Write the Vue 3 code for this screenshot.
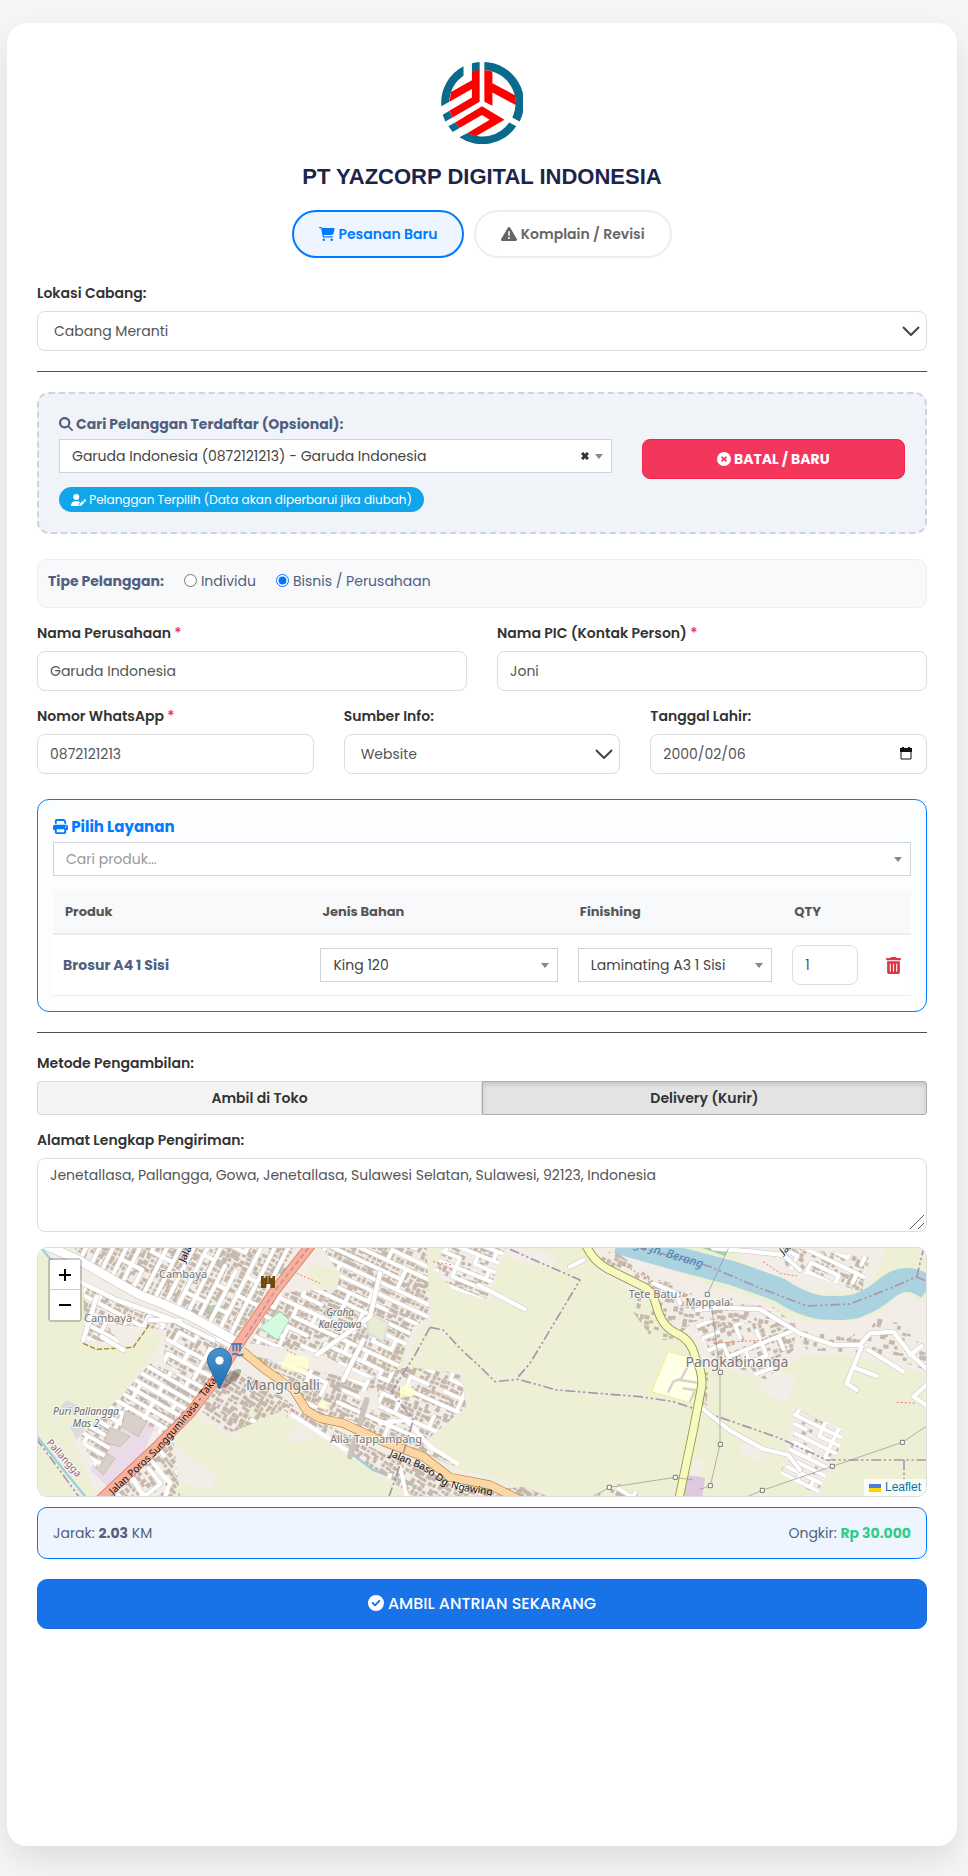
<script setup>
import { ref } from 'vue'

const icons = {
  cart: { box: '0 0 576 512', d: 'M0 24C0 10.7 10.7 0 24 0H69.5c22 0 41.5 12.8 50.6 32h411c26.3 0 45.5 25 38.6 50.4l-41 152.3c-8.5 31.4-37 53.3-69.5 53.3H170.7l5.4 28.5c2.2 11.3 12.1 19.5 23.6 19.5H488c13.3 0 24 10.7 24 24s-10.7 24-24 24H199.7c-34.6 0-64.3-24.6-70.7-58.5L77.4 54.5c-.7-3.8-4-6.5-7.9-6.5H24C10.7 48 0 37.3 0 24zM128 464a48 48 0 1 1 96 0 48 48 0 1 1 -96 0zm336-48a48 48 0 1 1 0 96 48 48 0 1 1 0-96z' },
  warn: { box: '0 32 512 448', d: 'M256 32c14.2 0 27.3 7.5 34.5 19.8l216 368c7.3 12.4 7.3 27.7 .2 40.1S486.3 480 472 480H40c-14.3 0-27.6-7.7-34.7-20.1s-7-27.8 .2-40.1l216-368C228.7 39.5 241.8 32 256 32zm0 128c-13.3 0-24 10.7-24 24V296c0 13.3 10.7 24 24 24s24-10.7 24-24V184c0-13.3-10.7-24-24-24zm32 224a32 32 0 1 0 -64 0 32 32 0 1 0 64 0z' },
  search: { box: '0 0 512 512', d: 'M416 208c0 45.9-14.9 88.3-40 122.7L502.6 457.4c12.5 12.5 12.5 32.8 0 45.3s-32.8 12.5-45.3 0L330.7 376c-34.4 25.2-76.8 40-122.7 40C93.1 416 0 322.9 0 208S93.1 0 208 0S416 93.1 416 208zM208 336a128 128 0 1 0 0-256 128 128 0 1 0 0 256z' },
  xmark: { box: '0 0 512 512', d: 'M256 512A256 256 0 1 0 256 0a256 256 0 1 0 0 512zM160 175c12-16 32-16 45 0l51 47 51-47c13-13 32-13 45 0s12 32 0 45l-47 36 47 47c12 12 12 32 0 45s-32 12-45 0l-51-47-51 47c-13 12-32 12-45 0s-12-32 0-45l47-47-47-36c-12-13-12-33 0-45z' },
  check: { box: '0 0 512 512', d: 'M256 512A256 256 0 1 0 256 0a256 256 0 1 0 0 512zM385 209L246 348c-12 12-31 12-43 0l-76-76c-12-12-12-31 0-43s31-12 43 0l55 55L342 166c12-12 31-12 43 0s12 31 0 43z' },
  print: { box: '0 0 512 512', d: 'M128 0C92.7 0 64 28.7 64 64v96h64V64H354.7L384 93.3V160h64V93.3c0-17-6.7-33.3-18.7-45.3L400 18.7C388 6.7 371.7 0 354.7 0H128zM384 352v32 64H128V384 368 352H384zm64 32h32c17.7 0 32-14.3 32-32V256c0-35.3-28.7-64-64-64H64c-35.3 0-64 28.7-64 64v96c0 17.7 14.3 32 32 32H64v64c0 35.3 28.7 64 64 64H384c35.3 0 64-28.7 64-64V384zM432 248a24 24 0 1 1 0 48 24 24 0 1 1 0-48z' },
  userPen: { box: '0 0 640 512', d: 'M224 256A128 128 0 1 0 224 0a128 128 0 1 0 0 256zm-45.7 48C79.8 304 0 383.8 0 482.3C0 498.7 13.3 512 29.7 512H322.8c-3.1-8.8-3.7-18.4-1.4-27.8l15-60.1c2.8-11.3 8.6-21.5 16.8-29.7l40.3-40.3c-32.1-31-75.7-50.1-123.9-50.1H178.3zm435.5-68.3c-15.6-15.6-40.9-15.6-56.6 0l-29.4 29.4 71 71 29.4-29.4c15.6-15.6 15.6-40.9 0-56.6l-14.4-14.4zM375.9 417c-4.1 4.1-7 9.2-8.4 14.9l-15 60.1c-1.4 5.5 .2 11.2 4.2 15.2s9.7 5.6 15.2 4.2l60.1-15c5.6-1.4 10.8-4.3 14.9-8.4L576.1 358.7l-71-71L375.9 417z' },
  trash: { box: '0 0 448 512', d: 'M135.2 17.7C140.6 6.8 151.7 0 163.8 0H284.2c12.1 0 23.2 6.8 28.6 17.7L320 32h96c17.7 0 32 14.3 32 32s-14.3 32-32 32H32C14.3 96 0 81.7 0 64S14.3 32 32 32h96l7.2-14.3zM32 128H416V448c0 35.3-28.7 64-64 64H96c-35.3 0-64-28.7-64-64V128zm96 64c-8.8 0-16 7.2-16 16V432c0 8.8 7.2 16 16 16s16-7.2 16-16V208c0-8.8-7.2-16-16-16zm96 0c-8.8 0-16 7.2-16 16V432c0 8.8 7.2 16 16 16s16-7.2 16-16V208c0-8.8-7.2-16-16-16zm96 0c-8.8 0-16 7.2-16 16V432c0 8.8 7.2 16 16 16s16-7.2 16-16V208c0-8.8-7.2-16-16-16z' },
}

const tab = ref('baru')
const customerType = ref('bisnis')
const company = ref('Garuda Indonesia')
const pic = ref('Joni')
const phone = ref('0872121213')
const birth = ref('2000/02/06')
const qty = ref(1)
const delivery = ref('kurir')
const address = ref('Jenetallasa, Pallangga, Gowa, Jenetallasa, Sulawesi Selatan, Sulawesi, 92123, Indonesia')

// Housing districts: outline, street bearing, block size, share of streets and houses kept
const districts = [
  { pts: [[130, 20], [800, 20], [620, 290], [480, 215], [330, 150], [170, 70]], ang: 27, u: 36, v: 62, road: 0.35, cross: 0.9, house: 0.95 },
  { pts: [[870, 20], [1190, 20], [1200, 230], [1150, 260], [1090, 420], [1000, 410], [870, 340], [660, 310], [740, 160], [840, 150], [920, 150], [930, 100]], ang: 25, u: 62, v: 34, road: 0.85, cross: 0.35, house: 0.95 },
  { pts: [[160, 130], [400, 230], [610, 310], [590, 370], [530, 440], [450, 400], [400, 370], [410, 270], [230, 250], [270, 310], [160, 300]], ang: 28, u: 52, v: 36, road: 0.75, cross: 0.3, house: 0.9 },
  { pts: [[360, 370], [540, 440], [400, 590], [300, 520], [200, 690], [150, 590], [290, 450]], ang: 30, u: 60, v: 27, road: 0.95, cross: 0.45, house: 0.9 },
  { pts: [[640, 340], [1000, 425], [1130, 380], [1290, 400], [1310, 500], [1190, 600], [1280, 680], [1060, 600], [870, 530], [720, 400]], ang: 24, u: 56, v: 40, road: 0.65, cross: 0.3, house: 0.9 },
  { pts: [[600, 390], [690, 420], [820, 520], [1060, 640], [1190, 680], [1380, 750], [1480, 740], [1550, 768], [1150, 768], [960, 640], [760, 510], [600, 580], [510, 510]], ang: 32, u: 110, v: 80, road: 0.4, cross: 0.2, house: 0.9 },
  { pts: [[1215, 90], [1240, 20], [1430, 20], [1400, 90], [1370, 180], [1270, 150]], ang: 22, u: 48, v: 30, road: 0.9, cross: 0.35, house: 0.6 },
  { pts: [[340, 650], [430, 600], [450, 768], [260, 768]], ang: 52, u: 60, v: 60, road: 0.6, cross: 0.3, house: 0.7 },
  { pts: [[2250, 20], [2520, 50], [2495, 155], [2270, 85]], ang: 26, u: 46, v: 30, road: 0.85, cross: 0.5, house: 0.6 },
  { pts: [[2290, 500], [2440, 570], [2430, 620], [2360, 765], [2250, 700], [2290, 600]], ang: 26, u: 44, v: 25, road: 0.92, cross: 0.4, house: 0.15 },
  { pts: [[1990, 240], [2150, 250], [2300, 250], [2290, 330], [2210, 420], [2040, 350]], ang: -22, u: 54, v: 40, road: 0.65, cross: 0.35, house: 0.6 },
  { pts: [[1840, 110], [1930, 130], [1990, 180], [2230, 200], [2300, 260], [2000, 235], [1930, 300], [1870, 300], [1790, 190]], ang: 12, u: 90, v: 70, road: 0.2, cross: 0.1, house: 0.6 },
  { pts: [[1690, 60], [1750, 30], [1860, 110], [1840, 150]], ang: 27, u: 200, v: 200, road: 0, cross: 0, house: 0.6 },
  { pts: [[2300, 270], [2500, 300], [2540, 235], [2610, 250], [2688, 330], [2688, 390], [2600, 360], [2500, 340], [2330, 330]], ang: 10, u: 200, v: 200, road: 0, cross: 0, house: 0.4 },
  { pts: [[2010, 380], [2035, 400], [2030, 500], [2010, 500]], ang: 0, u: 200, v: 200, road: 0, cross: 0, house: 0.9 },
  { pts: [[1700, 768], [1720, 745], [1790, 725], [1830, 768]], ang: 30, u: 50, v: 40, road: 0.6, cross: 0.3, house: 0.4 },
]

// Small seeded generator, so the street pattern is the same on each load
let seed = 7
const rnd = () => {
  seed = (seed * 16807) % 2147483647
  return seed / 2147483647
}

const blocks = districts.map((area, id) => {
  const xs = area.pts.map((p) => p[0])
  const ys = area.pts.map((p) => p[1])
  const cx = (Math.min(...xs) + Math.max(...xs)) / 2
  const cy = (Math.min(...ys) + Math.max(...ys)) / 2
  const r = Math.hypot(Math.max(...xs) - cx, Math.max(...ys) - cy)
  const nu = Math.ceil(r / area.u)
  const nv = Math.ceil(r / area.v)
  let streets = ''
  let houses = ''
  for (let y = -r; y < r; y += 15) {
    for (let x = -r; x < r; x += 16) {
      if (rnd() < area.house) {
        const w = Math.round(9 + rnd() * 8)
        const h = Math.round(8 + rnd() * 7)
        houses += `M${Math.round(x + rnd() * 5)} ${Math.round(y + rnd() * 5)}h${w}v${h}h-${w}z`
      }
    }
  }
  for (let i = -nu; i <= nu; i++) {
    for (let j = -nv; j <= nv; j++) {
      const x = i * area.u
      const y = j * area.v
      if (rnd() < area.road) streets += `M${x} ${y}h${area.u}`
      if (rnd() < area.cross) streets += `M${x} ${y}v${area.v}`
    }
  }
  return {
    id: `district-${id}`,
    outline: area.pts.map((p) => p.join(',')).join(' '),
    place: `translate(${cx} ${cy}) rotate(${area.ang})`,
    streets,
    houses,
  }
})

const pylons = [[682, 163], [721, 397], [721, 613], [691, 737], [586, 712], [388, 742], [847, 751], [1057, 679], [1267, 607]]
</script>

<template>
  <main class="card">
    <header class="head">
      <svg class="logo" viewBox="483 66 244 244" role="img" aria-label="Yazcorp">
        <g fill="#0a6a8c">
          <path d="M550 79A122 122 0 0 0 484 198L508 184A98 98 0 0 1 550 107Z" />
          <path d="M575 70A122 122 0 0 1 598 66V91L575 95Z" />
          <path d="M612 66A122 122 0 0 1 717 243L695 231A98 98 0 0 0 612 90Z" />
          <path d="M707 257A122 122 0 0 1 538 290L562 277A98 98 0 0 0 686 246Z" />
          <path d="M488 223L509 211L517 231L496 243Z" />
          <path d="M505 257L525 246L539 262L518 274Z" />
        </g>
        <g fill="#f00">
          <path d="M598 90L575 94V120L513 155L508 184L575 146V172L509 210L517 231L598 184Z" />
          <path d="M612 90L636 94V129L703 165L707 195L636 157V196L612 184Z" />
          <path d="M605 198L672 238L587 287L561 278L628 238L605 224L539 262L525 246Z" />
        </g>
      </svg>
      <h1>PT YAZCORP DIGITAL INDONESIA</h1>
      <nav class="tabs">
        <button type="button" class="tab" :class="{ on: tab === 'baru' }" @click="tab = 'baru'">
          <svg class="ic" :viewBox="icons.cart.box"><path :d="icons.cart.d" /></svg>
          Pesanan Baru
        </button>
        <button type="button" class="tab" :class="{ on: tab === 'komplain' }" @click="tab = 'komplain'">
          <svg class="ic" :viewBox="icons.warn.box"><path :d="icons.warn.d" /></svg>
          Komplain / Revisi
        </button>
      </nav>
    </header>

    <form @submit.prevent>
      <div class="field">
        <label for="cabang">Lokasi Cabang:</label>
        <div class="pick">
          <select id="cabang" class="control wide-pad"><option>Cabang Meranti</option></select>
          <svg class="chev" viewBox="0 0 18 10"><path d="M1 1L9 9L17 1" /></svg>
        </div>
      </div>

      <hr />

      <section class="finder">
        <div class="finder-main">
          <label for="pelanggan" class="finder-label">
            <svg class="ic" :viewBox="icons.search.box"><path :d="icons.search.d" /></svg>
            Cari Pelanggan Terdaftar (Opsional):
          </label>
          <div class="pick">
            <select id="pelanggan" class="combo"><option>Garuda Indonesia (0872121213) - Garuda Indonesia</option></select>
            <button type="button" class="clear" aria-label="Hapus">
              <svg viewBox="0 0 8 8"><path d="M1 1L7 7M7 1L1 7" /></svg>
            </button>
            <span class="caret"></span>
          </div>
          <span class="badge">
            <svg class="ic" :viewBox="icons.userPen.box"><path :d="icons.userPen.d" /></svg>
            Pelanggan Terpilih (Data akan diperbarui jika diubah)
          </span>
        </div>
        <button type="button" class="cancel">
          <svg class="ic" :viewBox="icons.xmark.box"><path :d="icons.xmark.d" /></svg>
          BATAL / BARU
        </button>
      </section>

      <fieldset class="kind">
        <span class="kind-title">Tipe Pelanggan:</span>
        <label><input v-model="customerType" type="radio" name="tipe" value="individu" />Individu</label>
        <label><input v-model="customerType" type="radio" name="tipe" value="bisnis" />Bisnis / Perusahaan</label>
      </fieldset>

      <div class="row two">
        <div class="field">
          <label for="perusahaan">Nama Perusahaan <i>*</i></label>
          <input id="perusahaan" v-model="company" class="control" type="text" />
        </div>
        <div class="field">
          <label for="pic">Nama PIC (Kontak Person) <i>*</i></label>
          <input id="pic" v-model="pic" class="control" type="text" />
        </div>
      </div>

      <div class="row three">
        <div class="field">
          <label for="wa">Nomor WhatsApp <i>*</i></label>
          <input id="wa" v-model="phone" class="control" type="tel" />
        </div>
        <div class="field">
          <label for="sumber">Sumber Info:</label>
          <div class="pick">
            <select id="sumber" class="control wide-pad"><option>Website</option></select>
            <svg class="chev" viewBox="0 0 18 10"><path d="M1 1L9 9L17 1" /></svg>
          </div>
        </div>
        <div class="field">
          <label for="lahir">Tanggal Lahir:</label>
          <div class="pick">
            <input id="lahir" v-model="birth" class="control" type="text" />
            <svg class="cal" viewBox="0 0 12 13"><path d="M1 2H11V12H1Z" /><path class="bar" d="M0 1H12V5H0ZM2 0H4V2H2ZM8 0H10V2H8Z" /></svg>
          </div>
        </div>
      </div>

      <section class="services">
        <label for="produk" class="services-title">
          <svg class="ic" :viewBox="icons.print.box"><path :d="icons.print.d" /></svg>
          Pilih Layanan
        </label>
        <div class="pick">
          <select id="produk" class="combo muted"><option>Cari produk...</option></select>
          <span class="caret"></span>
        </div>
        <table>
          <colgroup>
            <col class="c30" /><col class="c30" /><col class="c25" /><col class="c10" /><col class="c5" />
          </colgroup>
          <thead>
            <tr><th>Produk</th><th>Jenis Bahan</th><th>Finishing</th><th>QTY</th><th></th></tr>
          </thead>
          <tbody>
            <tr>
              <td class="name">Brosur A4 1 Sisi</td>
              <td>
                <div class="pick">
                  <select class="combo" aria-label="Jenis Bahan"><option>King 120</option></select>
                  <span class="caret"></span>
                </div>
              </td>
              <td>
                <div class="pick">
                  <select class="combo" aria-label="Finishing"><option>Laminating A3 1 Sisi</option></select>
                  <span class="caret"></span>
                </div>
              </td>
              <td><input v-model="qty" class="control" type="number" aria-label="QTY" /></td>
              <td>
                <button type="button" class="trash" aria-label="Hapus produk">
                  <svg :viewBox="icons.trash.box"><path :d="icons.trash.d" /></svg>
                </button>
              </td>
            </tr>
          </tbody>
        </table>
      </section>

      <hr class="tight" />

      <div class="field method">
        <label for="toko">Metode Pengambilan:</label>
        <div class="switch">
          <button id="toko" type="button" :class="{ on: delivery === 'toko' }" @click="delivery = 'toko'">Ambil di Toko</button>
          <button type="button" :class="{ on: delivery === 'kurir' }" @click="delivery = 'kurir'">Delivery (Kurir)</button>
        </div>
      </div>

      <div class="field address">
        <label for="alamat">Alamat Lengkap Pengiriman:</label>
        <div class="pick">
          <textarea id="alamat" v-model="address" class="control"></textarea>
          <svg class="grip" viewBox="0 0 16 16"><path d="M1 15L15 1M9 15L15 9" /></svg>
        </div>
      </div>

      <div class="map">
        <svg class="tiles" viewBox="0 0 888 248" preserveAspectRatio="xMidYMid slice">
          <defs>
            <clipPath v-for="b in blocks" :id="b.id" :key="b.id"><polygon :points="b.outline" /></clipPath>
            <path id="poros" d="M75 247L122 203L155 165L190 118" />
            <path id="baso" d="M351 208L385 222L407 238L425 243L452 247L490 257" />
            <linearGradient id="pin" x1="0" y1="0" x2="0" y2="1">
              <stop offset="0" stop-color="#4794d0" /><stop offset="1" stop-color="#1f6cb0" />
            </linearGradient>
          </defs>
          <rect width="888" height="248" fill="#eef0d5" />
          <g transform="translate(-8 -8) scale(.33333)" fill="none" stroke-linejoin="round">
            <g fill="#f2ede7">
              <path d="M70 20H1200L1190 130L1210 240L1165 265L1120 410L1290 395L1315 500L1200 600L1290 690L1400 715L1550 768H1150L960 650L760 520L680 440L620 600L480 520L430 620L560 700L540 750L420 720V768H200L130 600L230 530L290 440L360 360L400 290L370 245L300 320L150 310L200 170L50 60Z" />
              <path d="M1205 90L1240 20H1480L1410 60L1380 190L1270 150ZM800 560L760 600L830 610L850 570Z" />
            </g>
            <path d="M840 70L940 100L905 155L835 130ZM1050 310L1130 320L1115 400L1040 390Z" fill="#eef0d5" />
            <path d="M980 450L1060 440L1050 540L990 520Z" fill="#f2ede7" />
            <path d="M290 490L385 535L340 640L235 745L180 690Z" fill="#ebdbe8" />
            <path d="M90 500L110 480L150 500L140 530ZM120 560L150 540L170 560L140 600Z" fill="#dcdcdc" />
            <g transform="translate(1350 0)" fill="#f2ede7">
              <path d="M340 20L480 40L640 120L870 190L920 240L1100 245L1200 220L1260 160L1340 190V400L1100 345L960 345L860 425L760 395L680 380L640 320L560 250L500 180L350 90Z" />
              <path d="M750 20H1220L1170 145L1000 160L800 70Z" />
              <path d="M860 385L950 405L920 490L840 450ZM790 590L860 630L840 665L780 640ZM640 650L680 670L660 710L630 700ZM80 20L230 40L220 90L100 60ZM940 500L1090 570L1020 760L910 700Z" />
              <path d="M565 335L640 355L660 400L640 490L515 455Z" fill="#ffffe5" stroke="#f5f08a" stroke-width="3" />
              <path d="M620 705L675 713L667 770H608Z" fill="#dfc9df" />
              <path d="M412 5L600 58L760 100L900 150Q960 192 1020 202Q1090 208 1130 198Q1180 180 1220 145Q1280 95 1345 145" stroke="#aad3df" stroke-width="72" fill="none" />
              <path d="M655 20H745L735 48Z" fill="#a9d0a0" />
            </g>
            <path d="M520 212L550 195L592 200L578 225L552 236ZM745 80L775 85L760 105L742 100Z" fill="#aecfb2" />
            <g stroke="#9ccfe0" stroke-width="7">
              <path d="M35 25L75 75M425 238L530 285L610 318M950 630L1030 690L1160 740M22 590L85 670L170 775M910 20L960 60" />
            </g>

            <g v-for="b in blocks" :key="b.id" :clip-path="`url(#${b.id})`">
              <g :transform="b.place">
                <path :d="b.houses" fill="#c6b8ac" />
                <path :d="b.streets" stroke="#cfcac6" stroke-width="15" stroke-linecap="round" />
                <path :d="b.streets" stroke="#fff" stroke-width="12" stroke-linecap="round" />
              </g>
            </g>

            <path d="M750 215L778 240L742 300L690 262Z" fill="#d5fbde" stroke="#8fd3b5" stroke-width="2" />
            <path d="M770 340L838 352L832 405L750 385ZM870 480L905 490L890 512L860 500ZM1110 440L1140 430L1160 465L1110 475Z" fill="#ffffd0" fill-opacity=".8" />
            <path d="M1010 240L1030 225L1075 250L1060 305L1015 280Z" fill="#e8ecd3" stroke="#ddd" stroke-width="6" />
            <path d="M985 460L1040 440L1050 500L1010 520Z" fill="#f2ede7" />
            <path d="M285 510L350 545L325 590L275 560ZM240 560L300 590L270 620L220 605ZM230 640L255 655L220 705L205 690Z" fill="#d9d0c9" stroke="#bfb0a5" stroke-width="2" />
            <path d="M160 310L200 328L310 322L362 248" stroke="#ac8327" stroke-width="4" stroke-dasharray="16 6" />
            <g stroke-linecap="round">
              <g stroke="#c9c4c0" stroke-width="17">
                <path d="M150 125L260 180L430 240L550 300M200 170L160 300M215 290L280 330M360 240L450 242M1010 480L960 650M860 345L1020 230L1050 100M940 420L1000 300" />
              </g>
              <path d="M45 15L150 62L250 120L330 165L400 192L480 228L560 272L632 312" stroke="#c9c4c0" stroke-width="29" />
              <g stroke="#fff">
                <path d="M150 125L260 180L430 240L550 300M200 170L160 300M215 290L280 330M360 240L450 242M860 345L1020 230L1050 100M940 420L1000 300" stroke-width="14" />
                <path d="M45 15L150 62L250 120L330 165L400 192L480 228L560 272L632 312" stroke-width="26" />
                <path d="M345 640L420 730L405 770M300 700L340 770M780 520L950 630M1110 680L1130 770M1050 550L1130 540L1200 620L1280 670" stroke-width="12" />
              </g>
            </g>
            <path d="M636 332L700 385L790 448L830 512L870 535L940 550L1060 605L1180 650L1260 712L1380 735L1470 780" stroke="#b98a35" stroke-width="27" />
            <path d="M636 332L700 385L790 448L830 512L870 535L940 550L1060 605L1180 650L1260 712L1380 735L1470 780" stroke="#fcd6a4" stroke-width="23" />
            <path d="M850 5L740 145L620 320L560 415L480 520L370 630L210 780" stroke="#d9694f" stroke-width="32" />
            <path d="M850 5L740 145L620 320L560 415L480 520L370 630L210 780" stroke="#f8b19c" stroke-width="28" />
            <path d="M850 5L740 145L640 300" stroke="#b98aa0" stroke-width="4" stroke-dasharray="16 8" />
            <g stroke="#ad93ad" stroke-width="5" stroke-dasharray="30 8 7 8 7 8">
              <path d="M18 595L85 685L150 775M1200 262L1240 270L1290 325L1350 380L1395 425L1465 418L1580 450L1830 470L1930 485L2050 525L2250 595L2390 660H2690" />
              <path d="M1200 262L1155 345L1085 455L1150 540L1100 705L1075 775M1465 410L1500 370L1650 120L1440 28L1420 15M2622 660V745" />
              <path d="M1820 20L2040 80L2180 140L2330 198L2460 192L2580 145L2660 110L2690 125M2660 112L2682 20" />
            </g>

            <g transform="translate(1350 0)">
              <g stroke-linecap="round">
                <path d="M-5 135L135 208M650 210L720 202L840 208L880 232L960 280L1060 315L1140 315L1170 280L1240 275L1290 340L1345 392M1145 320L1100 430L1130 450M1120 382L1190 408M1165 330L1270 395M670 508L750 572L850 627L925 645L960 690M700 25L820 35L910 45L960 90M520 130L590 160L600 190M1345 430L1300 470L1345 500M1290 345L1325 318M270 80L310 60" stroke="#c9c4c0" stroke-width="16" />
                <path d="M-5 135L135 208M650 210L720 202L840 208L880 232L960 280L1060 315L1140 315L1170 280L1240 275L1290 340L1345 392M1145 320L1100 430L1130 450M1120 382L1190 408M1165 330L1270 395M670 508L750 572L850 627L925 645L960 690M700 25L820 35L910 45L960 90M520 130L590 160L600 190M1345 430L1300 470L1345 500M1290 345L1325 318M270 80L310 60" stroke="#fff" stroke-width="13" />
                <path d="M565 455L580 425L605 415L620 385M610 445L645 450L630 485M600 420L650 428" stroke="#d4d2cf" stroke-width="7" />
              </g>
              <path d="M315 10Q340 70 400 95L500 145Q520 160 530 200Q545 260 590 280Q635 300 645 350Q670 400 665 440L640 570L595 785" stroke="#8f9440" stroke-width="27" />
              <path d="M315 10Q340 70 400 95L500 145Q520 160 530 200Q545 260 590 280Q635 300 645 350Q670 400 665 440L640 570L595 785" stroke="#f7fabf" stroke-width="22" />
              <path d="M745 25L682 163M695 200L720 397V613L691 737L660 748M640 720L586 712L388 742L330 775M790 775L847 751L1057 679L1267 607L1340 558" stroke="#8f8f8f" stroke-width="2" />
              <g stroke="#777" stroke-width="3" fill="#fff">
                <rect v-for="p in pylons" :key="p.join()" :x="p[0] - 6" :y="p[1] - 6" width="12" height="12" />
              </g>
              <path d="M430 75L520 125M850 65L900 100L950 108M560 180L640 160M700 310L850 300M1250 487L1310 490M1100 300L1130 280" stroke="#f4766a" stroke-width="3" stroke-dasharray="6 6" />
            </g>
            <path d="M800 100L870 130M580 450L620 400M770 330L800 345M1210 65L1270 75M770 530L790 510" stroke="#f4766a" stroke-width="3" stroke-dasharray="6 6" />
            <path d="M693 108h8v6h6v-6h6v20h2v-20h6v6h6v-6h8v36h-14v-12h-12v12h-16z" fill="#734a08" />
            <path d="M604 312H636M610 312V334M620 312V334M630 312V334M606 344q8 -6 16 0t18 -2" stroke="#4a7fc0" stroke-width="6" />
          </g>

          <g class="place">
            <text x="145" y="30">Cambaya</text>
            <text x="70" y="74">Cambaya</text>
            <text x="338" y="195">Alla' Tappampang</text>
            <text x="615" y="50">Tete Batu</text>
            <text x="671" y="58">Mappala'</text>
            <text class="town" x="245" y="142">Mangngalli</text>
            <text class="town" x="699" y="119">Pangkabinanga</text>
          </g>
          <g class="estate">
            <text x="302" y="68">Graha</text>
            <text x="302" y="80">Kalegowa</text>
            <text x="48" y="167">Puri Pallangga</text>
            <text x="48" y="179">Mas 2</text>
          </g>
          <g class="road">
            <text><textPath href="#poros">Jalan Poros Sungguminasa - Taka</textPath></text>
            <text><textPath href="#baso">Jalan Baso Dg. Ngawing</textPath></text>
            <text transform="translate(147 15) rotate(-66)">Jalan</text>
            <text transform="translate(745 7) rotate(-38)">Jalan</text>
          </g>
          <text class="river" transform="translate(582 -5) rotate(17)">ungu Jn. Berang</text>
          <text class="ward" transform="translate(8 195) rotate(48)">Pallangga</text>

          <ellipse cx="191" cy="131" rx="15" ry="5" fill="#333" opacity=".35" transform="rotate(-38 191 131)" />
          <g transform="translate(169 100)">
            <path d="M12.5 .5C5.8 .5 .5 5.8 .5 12.3C.5 15 1.5 17.8 2.6 20L12.5 40.3L22.4 20C23.5 17.8 24.5 15 24.5 12.3C24.5 5.8 19.2 .5 12.5 .5Z" fill="url(#pin)" stroke="#2b6ca8" />
            <circle cx="12.5" cy="12.5" r="4.5" fill="#fff" stroke="#2b6ca8" stroke-width=".6" />
          </g>
        </svg>
        <div class="zoom">
          <button type="button" aria-label="Perbesar"><svg viewBox="0 0 14 14"><path d="M1 7H13M7 1V13" /></svg></button>
          <button type="button" aria-label="Perkecil"><svg viewBox="0 0 14 14"><path d="M1 7H13" /></svg></button>
        </div>
        <div class="credit">
          <svg viewBox="0 0 12 8"><path fill="#4c7be1" d="M0 0H12V4H0Z" /><path fill="#ffd500" d="M0 4H12V8H0Z" /></svg>
          <a href="#leaflet">Leaflet</a>
        </div>
      </div>

      <div class="fare">
        <span>Jarak: <b>2.03</b> KM</span>
        <span>Ongkir: <b class="price">Rp 30.000</b></span>
      </div>

      <button type="submit" class="submit">
        <svg class="ic" :viewBox="icons.check.box"><path :d="icons.check.d" /></svg>
        AMBIL ANTRIAN SEKARANG
      </button>
    </form>
  </main>
</template>

<style>
html,
body {
  background: #f4f7f6;
}
#app {
  display: flow-root;
}
</style>

<style scoped>
.card {
  box-sizing: border-box;
  max-width: 950px;
  min-height: 1823px;
  margin: 23px 11px 30px 7px;
  padding: 39px 30px 30px;
  background: #fff;
  border-radius: 20px;
  box-shadow: 0 15px 35px rgba(0, 0, 0, 0.1);
  color: #555;
  font-family: Poppins, Inter, sans-serif;
  font-size: 14px;
  line-height: 24px;
}
.card *,
.card *::before {
  box-sizing: border-box;
}
button,
input,
select,
textarea {
  font: inherit;
  margin: 0;
}
button {
  cursor: pointer;
}
.ic {
  height: 14px;
  fill: currentColor;
  vertical-align: -2px;
}
.head {
  display: flex;
  flex-direction: column;
  align-items: center;
}
.logo {
  width: 82px;
  height: 82px;
}
h1 {
  margin: 18px 0;
  color: #1b254b;
  font: bold 22px/30px "Liberation Sans", Arial, sans-serif;
}
.tabs {
  display: flex;
  gap: 10px;
}
.tab {
  height: 48px;
  padding: 0 25px;
  border: 2px solid #eee;
  border-radius: 24px;
  background: #fff;
  color: #666;
  font-weight: 600;
}
.tab.on {
  border-color: #007bff;
  background: #eef5ff;
  color: #007bff;
}
form {
  margin-top: 23px;
}
.field > label {
  display: block;
  margin-bottom: 6px;
  color: #333;
  font-weight: 600;
}
.field i {
  color: #f5365c;
  font-style: normal;
}
.control {
  display: block;
  width: 100%;
  height: 40px;
  padding: 0 12px;
  border: 1px solid #ddd;
  border-radius: 8px;
  background: #fff;
  color: #555;
  appearance: none;
  outline: none;
}
.wide-pad {
  padding: 0 16px;
}
input[type='number'] {
  appearance: textfield;
}
.pick {
  position: relative;
}
.chev {
  position: absolute;
  top: 15px;
  right: 7px;
  width: 18px;
  height: 10px;
  fill: none;
  stroke: #444;
  stroke-width: 2;
  pointer-events: none;
}
.cal {
  position: absolute;
  top: 13px;
  right: 15px;
  width: 12px;
  height: 13px;
  fill: none;
  stroke: #111;
  stroke-width: 1;
}
.cal .bar {
  fill: #111;
  stroke: none;
}
hr {
  height: 1px;
  margin: 20px 0;
  border: 0;
  background: #505050;
}
hr.tight {
  margin-bottom: 18px;
}
.combo {
  display: block;
  width: 100%;
  height: 34px;
  padding: 0 28px 0 12px;
  border: 1px solid #ced4da;
  border-radius: 0;
  background: #fff;
  color: #444;
  appearance: none;
  outline: none;
}
.combo.muted {
  color: #999;
}
.caret {
  position: absolute;
  top: 15px;
  right: 9px;
  border: 4px solid transparent;
  border-top: 5px solid #888;
  border-bottom: 0;
  pointer-events: none;
}
.clear {
  position: absolute;
  top: 10px;
  right: 20px;
  width: 14px;
  height: 14px;
  padding: 3px;
  border: 0;
  background: none;
}
.clear svg {
  display: block;
  width: 8px;
  height: 8px;
  stroke: #333;
  stroke-width: 3;
}
.finder {
  display: flex;
  align-items: center;
  gap: 30px;
  padding: 18px 20px 20px;
  border: 2px dashed #cbd5e1;
  border-radius: 12px;
  background: #f0f4f9;
}
.finder-main {
  flex: 554;
  min-width: 0;
}
.finder-label {
  display: block;
  margin-bottom: 3px;
  color: #525f7f;
  font-weight: 700;
}
.badge {
  display: inline-block;
  height: 25px;
  margin-top: 14px;
  padding: 0 12px;
  border-radius: 13px;
  background: #11a5e9;
  color: #fff;
  font-size: 12px;
  line-height: 25px;
  vertical-align: top;
}
.badge .ic {
  height: 12px;
}
.cancel {
  flex: 262;
  align-self: flex-start;
  height: 40px;
  margin-top: 27px;
  padding: 0;
  border: 1px solid #f52349;
  border-radius: 8px;
  background: #f5365c;
  color: #fff;
  font-weight: 700;
}
.kind {
  display: flex;
  align-items: center;
  height: 49px;
  margin: 25px 0 13px;
  padding: 0 10px 6px;
  border: 1px solid #eee;
  border-radius: 10px;
  background: #f8f9fb;
  color: #525f7f;
}
.kind-title {
  margin-right: 20px;
  font-weight: 700;
}
.kind label {
  display: flex;
  align-items: center;
  gap: 4px;
  margin-right: 20px;
}
.kind input {
  width: 13px;
  height: 13px;
}
.row {
  display: grid;
  gap: 30px;
  margin-bottom: 13px;
}
.two {
  grid-template-columns: repeat(2, minmax(0, 1fr));
}
.three {
  grid-template-columns: repeat(3, minmax(0, 1fr));
}
.services {
  margin-top: 25px;
  padding: 15px;
  border: 1px solid #007bff;
  border-radius: 12px;
  background: #fbfdff;
}
.services-title {
  display: block;
  margin-bottom: 3px;
  color: #007bff;
  font-size: 15px;
  font-weight: 700;
}
.services-title .ic {
  height: 15px;
}
table {
  width: 100%;
  margin-top: 15px;
  border-collapse: separate;
  border-spacing: 0;
  table-layout: fixed;
}
.c30 {
  width: 30%;
}
.c25 {
  width: 25%;
}
.c10 {
  width: 10%;
}
.c5 {
  width: 5%;
}
th {
  height: 44px;
  padding: 0 12px;
  border-bottom: 2px solid #ebedef;
  background: #f8f9fb;
  font-size: 13px;
  font-weight: 700;
  text-align: left;
}
td {
  height: 61px;
  padding: 0 10px;
  border-bottom: 1px solid #eee;
  background: #fff;
}
td.name {
  color: #525f7f;
  font-weight: 700;
}
.trash {
  display: block;
  margin: 0 0 0 auto;
  padding: 0;
  border: 0;
  background: none;
}
.trash svg {
  display: block;
  width: 15px;
  height: 17px;
  fill: #dc3545;
}
.switch {
  display: grid;
  grid-template-columns: 1fr 1fr;
}
.switch button {
  height: 34px;
  border: 1px solid #dbdbdb;
  border-radius: 3px 0 0 3px;
  background: #f4f4f4;
  color: #333;
  font-weight: 600;
}
.switch button + button {
  border-radius: 0 3px 3px 0;
}
.switch button.on {
  border-color: #adadad;
  background: #e4e4e4;
  box-shadow: inset 0 3px 5px rgba(0, 0, 0, 0.125);
}
.method {
  margin-bottom: 13px;
}
textarea.control {
  height: 74px;
  padding: 4px 12px;
  resize: none;
}
.grip {
  position: absolute;
  right: 2px;
  bottom: 2px;
  width: 16px;
  height: 16px;
  fill: none;
  stroke: #555;
}
.map {
  position: relative;
  height: 250px;
  margin-top: 15px;
  overflow: hidden;
  border: 1px solid #ddd;
  border-radius: 10px;
}
.tiles {
  display: block;
  width: 100%;
  height: 100%;
}
.tiles text {
  font-family: "Noto Sans", sans-serif;
  paint-order: stroke;
  stroke: rgba(255, 255, 255, 0.7);
  stroke-width: 2px;
  stroke-linejoin: round;
}
.place text {
  fill: #777;
  font-size: 11px;
  text-anchor: middle;
}
.place text.town {
  font-size: 14px;
}
.estate text {
  fill: #666;
  font-size: 10px;
  font-style: italic;
  text-anchor: middle;
}
.tiles .road text {
  fill: #111;
  font-size: 10px;
  stroke: none;
}
.tiles .river {
  fill: #4d80b3;
  stroke: none;
  font-size: 12px;
  font-style: italic;
}
.tiles .ward {
  fill: #8d618b;
  font-size: 10px;
}
.zoom {
  position: absolute;
  top: 10px;
  left: 10px;
  border: 2px solid rgba(0, 0, 0, 0.2);
  border-radius: 4px;
  background-clip: padding-box;
}
.zoom button {
  display: grid;
  place-items: center;
  width: 30px;
  height: 30px;
  padding: 0;
  border: 0;
  background: #fff;
}
.zoom button:first-child {
  border-bottom: 1px solid #ccc;
}
.zoom svg {
  width: 14px;
  height: 14px;
  stroke: #000;
  stroke-width: 2;
}
.credit {
  position: absolute;
  right: 0;
  bottom: 0;
  display: flex;
  align-items: center;
  gap: 4px;
  padding: 0 5px;
  background: rgba(255, 255, 255, 0.8);
  font: 12px/17px "Liberation Sans", Arial, sans-serif;
}
.credit svg {
  width: 12px;
  height: 8px;
}
.credit a {
  color: #0078a8;
  text-decoration: none;
}
.fare {
  display: flex;
  align-items: center;
  justify-content: space-between;
  height: 52px;
  margin: 10px 0 20px;
  padding: 0 15px;
  border: 1px solid #007bff;
  border-radius: 10px;
  background: #eef5ff;
  color: #525f7f;
}
.price {
  color: #2dce89;
}
.submit {
  width: 100%;
  height: 50px;
  border: 1px solid #1a69d6;
  border-radius: 10px;
  background: #1872e8;
  color: #fff;
  font-size: 16px;
  font-weight: 500;
}
.submit .ic {
  height: 16px;
}
</style>
